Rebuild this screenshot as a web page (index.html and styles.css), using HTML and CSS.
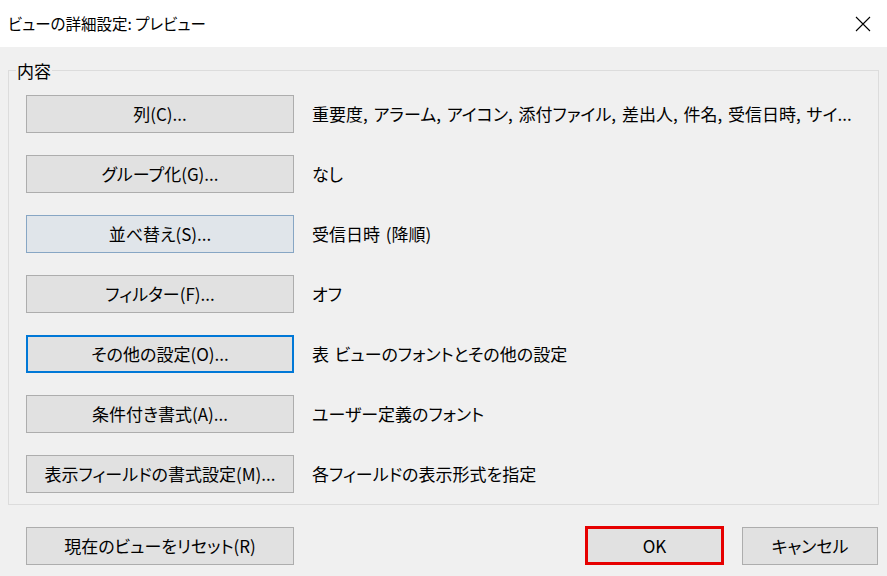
FILE: index.html
```html
<!DOCTYPE html>
<html lang="ja">
<head>
<meta charset="utf-8">
<link rel="stylesheet" href="styles.css">
</head>
<body>
<div class="dialog">
  <div class="titlebar">
    <span class="title">ビューの詳細設定: プレビュー</span>
    <span class="close"><svg width="16" height="16" viewBox="0 0 16 16"><path d="M1 1 L15 15 M15 1 L1 15" stroke="#000" stroke-width="1.1" fill="none"/></svg></span>
  </div>
  <div class="content">
    <fieldset class="group">
      <legend class="legend">内容</legend>
      <div class="row"><button class="btn">列(C)...</button><span class="desc">重要度, アラーム, アイコン, 添付ファイル, 差出人, 件名, 受信日時, サイ...</span></div>
      <div class="row"><button class="btn">グループ化(G)...</button><span class="desc">なし</span></div>
      <div class="row"><button class="btn hover">並べ替え(S)...</button><span class="desc">受信日時 (降順)</span></div>
      <div class="row"><button class="btn">フィルター(F)...</button><span class="desc">オフ</span></div>
      <div class="row"><button class="btn focus">その他の設定(O)...</button><span class="desc">表 ビューのフォントとその他の設定</span></div>
      <div class="row"><button class="btn">条件付き書式(A)...</button><span class="desc">ユーザー定義のフォント</span></div>
      <div class="row"><button class="btn">表示フィールドの書式設定(M)...</button><span class="desc">各フィールドの表示形式を指定</span></div>
    </fieldset>
    <div class="footer">
      <button class="btn">現在のビューをリセット(R)</button>
      <div class="right">
        <button class="btn ok">OK</button>
        <button class="btn cancel">キャンセル</button>
      </div>
    </div>
  </div>
</div>
</body>
</html>
```
FILE: styles.css
```css
* { box-sizing: border-box; }
html, body { margin: 0; padding: 0; }
body {
  width: 887px;
  height: 576px;
  overflow: hidden;
  font-family: "Noto Sans CJK JP", "Noto Sans", sans-serif;
  font-size: 17px;
  color: #000;
  font-feature-settings: "palt";
  background: #f0f0f0;
}
.dialog { width: 887px; height: 576px; display: flex; flex-direction: column; }
.titlebar {
  height: 47px;
  background: #fff;
  display: flex;
  align-items: center;
  justify-content: space-between;
  padding: 0 16px 2px 8px;
}
.title { font-size: 15.5px; line-height: 20px; }
.close { display: flex; width: 16px; height: 16px; margin-top: 2px; }
.content { flex: 1; padding: 15px 8px 0 8px; }
.group {
  margin: 0;
  border: 1px solid #dcdcdc;
  padding: 16px 0 0 17px;
  min-width: 0;
  display: flex;
  flex-direction: column;
  gap: 22px;
  height: 443px;
}
.legend {
  padding: 0 1px;
  margin-left: -10px;
  font-size: 17px;
  line-height: 17px;
}
.row { display: flex; align-items: center; gap: 18px; }
.btn {
  font: inherit;
  color: #000;
  background: #e1e1e1;
  border: 1px solid #adadad;
  height: 38px;
  width: 268px;
  padding: 0;
  line-height: 20px;
  text-align: center;
}
.btn.hover { background: #e0e5ea; border-color: #87a6c4; }
.btn.focus { border: 2px solid #0078d7; }
.desc { line-height: 20px; word-spacing: 2px; white-space: nowrap; }
.footer {
  display: flex;
  justify-content: space-between;
  align-items: center;
  padding: 21px 1px 0 18px;
}
.right { display: flex; gap: 18px; align-items: center; }
.btn.ok { width: 139px; height: 39px; border: 3px solid #e60000; }
.btn.cancel { width: 136px; }
```
